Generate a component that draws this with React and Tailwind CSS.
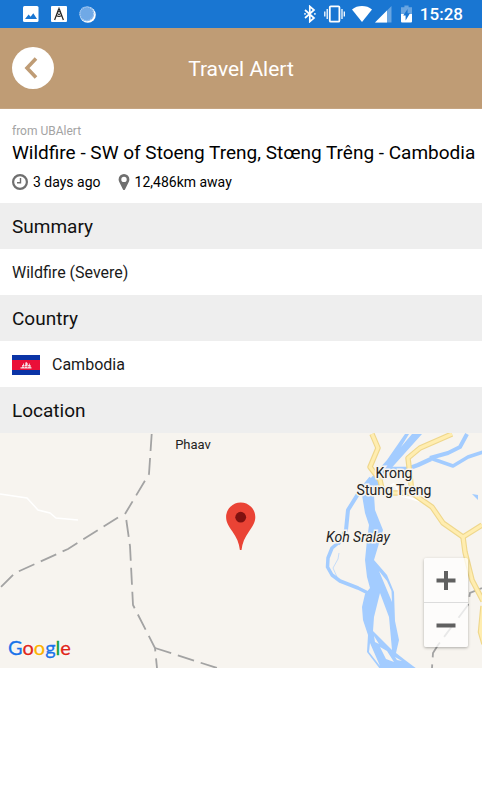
import React from 'react';

const alert = {
  source: 'UBAlert',
  title: 'Wildfire - SW of Stoeng Treng, Stœng Trêng - Cambodia',
  age: '3 days ago',
  distance: '12,486km away',
  summary: 'Wildfire (Severe)',
  country: 'Cambodia',
};

export default function App() {
  return (
    <div className="min-h-screen bg-white text-black font-['Roboto',sans-serif]">
      <StatusBar />
      <Header title="Travel Alert" />
      <main>
        <section className="px-3 pt-[14px] h-[94px]">
          <p className="text-[12px] leading-4 text-[#a3a3a3]">from {alert.source}</p>
          <h2 className="text-[19px] leading-7 whitespace-nowrap">{alert.title}</h2>
          <div className="flex items-center h-[30px] text-[14px]">
            <ClockIcon />
            <span className="ml-[5px]">{alert.age}</span>
            <PinIcon />
            <span className="ml-[5px]">{alert.distance}</span>
          </div>
        </section>

        <SectionTitle>Summary</SectionTitle>
        <Row>{alert.summary}</Row>
        <SectionTitle>Country</SectionTitle>
        <Row>
          <Flag />
          {alert.country}
        </Row>
        <SectionTitle>Location</SectionTitle>
        <LocationMap />
      </main>
    </div>
  );
}

const SectionTitle = ({ children }) => (
  <h3 className="flex items-center h-[46px] px-3 pt-0.5 bg-[#eeeeee] text-[19px] text-[#111]">{children}</h3>
);

const Row = ({ children }) => (
  <div className="flex items-center gap-3 h-[46px] px-3 pt-0.5 text-[16px] text-[#1a1a1a]">{children}</div>
);

const Header = ({ title }) => (
  <header className="grid grid-cols-[42px_1fr_42px] items-center h-[81px] px-3 border-b border-[#c6a582] bg-[#bf9c75]">
    <button type="button" aria-label="Back" className="w-[42px] h-[42px] rounded-full bg-white flex items-center justify-center">
      <svg width="42" height="42" viewBox="0 0 42 42" fill="none">
        <path d="M24 11.5 15 21l9 9.500" stroke="#bf9c75" strokeWidth="3.600" />
      </svg>
    </button>
    <h1 className="pt-1 text-center text-[21px] text-white">{title}</h1>
  </header>
);

const StatusBar = () => (
  <div className="flex items-center justify-between h-7 pl-[23px] pr-[19px] bg-[#1976d2] text-white">
    <div className="flex items-center gap-3">
      <svg width="16" height="16" viewBox="0 0 16 16">
        <rect width="15.5" height="16" rx="1.5" fill="#fff" />
        <path d="M2 13l3.6-4.6 2 2.4 2.7-3.6L14 13z" fill="#1976d2" />
      </svg>
      <svg width="16" height="16" viewBox="0 0 16 16">
        <rect width="16" height="16" rx="1" fill="#fff" />
        <path d="M8 1.5v2M7.6 3.2 3.6 14M8.4 3.2l4 10.8M5.4 9.4c1.6 1.2 3.6 1.2 5.2 0" stroke="#222" strokeWidth="1.2" fill="none" />
        <circle cx="8" cy="7" r="1.5" fill="#fff" stroke="#222" />
      </svg>
      <svg width="17" height="17" viewBox="0 0 17 17">
        <circle cx="8.8" cy="8.8" r="8" fill="#fff" />
        <circle cx="7.8" cy="7.8" r="7.4" fill="#70a9e6" />
        <circle cx="7.8" cy="7.8" r="6.9" fill="none" stroke="#b5d3f4" strokeWidth="1.3" strokeDasharray="1 1" />
      </svg>
    </div>
    <div className="flex items-center">
      <svg width="12" height="18" viewBox="0 0 12 18" fill="none" stroke="#fff" strokeWidth="1.7">
        <path d="M1 5l9 8-4.2 3.6V1.4L10 5l-9 8" />
        <path d="M.3 8.900h1.400M10.200 8.900h1.400" />
      </svg>
      <svg className="ml-2" width="21" height="18" viewBox="0 0 21 18" fill="none" stroke="#fff">
        <rect x="5.8" y="1.3" width="9.6" height="15.4" rx="1" strokeWidth="1.8" />
        <path d="M3.2 4v10M18 4v10M.8 6.5v5M20.3 6.5v5" strokeWidth="1.3" />
      </svg>
      <svg className="ml-[7px]" width="20" height="18" viewBox="0 0 20 18">
        <path d="M10 17 0 4.4C5.4-.2 14.6-.2 20 4.4z" fill="#fff" />
      </svg>
      <svg className="ml-[3px]" width="17" height="17" viewBox="0 0 17 17">
        <path d="M16.5 0v16.5H0z" fill="#fff" opacity=".35" />
        <path d="M12 4.5v12H0z" fill="#fff" />
      </svg>
      <svg className="ml-[9px]" width="11" height="18" viewBox="0 0 11 18">
        <path d="M3.4.5h4.2v1.7H11v7H0v-7h3.4z" fill="#fff" opacity=".35" />
        <path d="M0 9h11v7.5a1 1 0 0 1-1 1H1a1 1 0 0 1-1-1z" fill="#fff" />
        <path d="M6.6 4v4.2H9L4.6 15.4v-4.8H2.2z" fill="#1976d2" />
      </svg>
      <span className="ml-2 pt-0.5 text-[17px] font-medium">15:28</span>
    </div>
  </div>
);

const ClockIcon = () => (
  <svg width="16" height="16" viewBox="0 0 16 16" fill="none" stroke="#6f6f6f">
    <circle cx="8" cy="8" r="6.9" strokeWidth="2.2" />
    <path d="M8.5 4v4.8H5" strokeWidth="1.4" />
  </svg>
);

const PinIcon = () => (
  <svg className="ml-[17px]" width="12" height="16" viewBox="0 0 12 16">
    <path
      fillRule="evenodd"
      fill="#6f6f6f"
      d="M6 0a5.4 5.4 0 0 1 5.4 5.4c0 1.2-.4 2-.8 2.9L7 15.4c-.4.8-1.6.8-2 0L1.4 8.3C1 7.4.6 6.6.6 5.4A5.4 5.4 0 0 1 6 0zm0 2.7a2.7 2.7 0 1 0 0 5.4 2.7 2.7 0 0 0 0-5.4z"
    />
  </svg>
);

const Flag = () => (
  <svg width="28" height="20" viewBox="0 0 28 20">
    <rect width="28" height="20" fill="#0a33a6" />
    <rect y="5" width="28" height="10" fill="#ea0f38" />
    <path d="M8.5 13.5h11v-1.3h-.9V10h-.8V8.5h-.9V10h-1.2V8.2L14 6.8l-.7 1.4V10h-1.4V8.5h-.9V10h-.9v2.2h-1.6z" fill="#f6dfe3" />
    <path d="M10.6 11.5h6.8M12.5 10v2.8M15.6 10v2.8" stroke="#ea0f38" strokeWidth=".5" />
  </svg>
);

// Borders are drawn dashed, roads get a darker casing under the fill
const borders = [
  'M151.7 0 149 40 125 80',
  'M118 83.5 68 115 15 139 0 154',
  'M126.3 86 130 112 133 171 155 214 157 234',
  'M155 214 217 234',
  'M482 154 470 159 468 171 438 211 433 219 432 234',
];

const roads = [
  'M372 0 378 14 370 33 380 46 383 59H410',
  'M452 0 420 14 408 24 412 59 432 73 443 89 463 103 482 91',
  'M463 103 465 118 472 146 483 167',
  'M483 172 480.5 198 484 210',
];

const LocationMap = () => (
  <div className="relative h-[235px] bg-[#f7f4ef] overflow-hidden">
    <svg className="block w-full h-full" viewBox="0 -1 482 235" preserveAspectRatio="xMidYMid slice" fill="none">
      <path d="M0 60 27 64 38 76 50 79 56 84 78 86" stroke="#fff" strokeWidth="1.5" />

      <g fill="#a3ccff">
        <path
          fillRule="evenodd"
          d="M405 0 387 26 370 45 362 61 365 79 369 91 367 106 365 126 367 143 370 154 365 160 362 173 363 186 368 201 367 218 380 235H417L405 226 396 219 399 206 395 187 394 158 387 141 374 126 383 96 375 76 374 61 387 39 422 0zM409 0h3L401 13zM379 137 392 168 391.5 157 387 147zM380 159 389 183 392 216 373 197 374 183zM370 209 369 218 380 232zM374 202 379 210 375 208zM380 213 387 217 394 228 386 225zM395 223 402 227 397 226z"
        />
        <path d="M472 60 478 61V66z" />
      </g>
      <g stroke="#a3ccff" strokeLinejoin="round">
        <path d="M384 35 407 35 418 31 431 25" strokeWidth="4.5" />
        <path d="M430 24 453 32 468 23 483 18" strokeWidth="3.5" />
        <path d="M430 24 448 19 460 13 467 0" strokeWidth="4" />
        <path d="M371 44 358 60 348 76 346 96 338 110" strokeWidth="4" />
        <path d="M344 104 332 114 328 124 327.5 133 332 141 340 147 358 154 368 159" strokeWidth="3.5" />
        <path d="M339 119 338 125 333 134 337 143" strokeWidth="1" opacity=".6" />
      </g>

      <g stroke="#a3a3a3" strokeWidth="1.8" strokeDasharray="17 7">
        {borders.map((d) => <path key={d} d={d} />)}
      </g>

      <path d="M382 56 394 50 402 62 420 67" stroke="#fff" strokeWidth="2" />
      <g stroke="#efd78c" strokeWidth="5.5" strokeLinejoin="round">
        {roads.map((d) => <path key={d} d={d} />)}
      </g>
      <g stroke="#ffedb0" strokeWidth="3.2" strokeLinejoin="round">
        {roads.map((d) => <path key={d} d={d} />)}
      </g>

      <g fill="#222" stroke="#f7f4ef" strokeWidth="3" paintOrder="stroke" textAnchor="middle" className="text-[14px]">
        <text x="193" y="15" className="text-[13px]">Phaav</text>
        <text x="394" y="44">Krong</text>
        <text x="394" y="61">Stung Treng</text>
        <text x="358" y="108" className="italic">Koh Sralay</text>
      </g>

      <path
        d="M240.7 68.5a14.6 14.6 0 0 1 14.6 14.6c0 5.8-3 9.6-6.3 14.4-4.2 6.2-6.7 11.2-7.5 18.5h-1.6c-.8-7.3-3.3-12.3-7.5-18.5-3.3-4.8-6.3-8.6-6.3-14.4a14.6 14.6 0 0 1 14.6-14.6z"
        fill="#ea4335"
      />
      <circle cx="240.7" cy="83.2" r="5.4" fill="#7f1110" />
    </svg>

    <div className="absolute left-2 bottom-[9px] text-[20px] leading-6 font-['Lato',sans-serif] [-webkit-text-stroke:0.3px_currentColor] [text-shadow:0_0_2px_#fff,0_0_2px_#fff]">
      <span className="text-[#1a73e8]">G</span>
      <span className="text-[#e02418]">o</span>
      <span className="text-[#fbb200]">o</span>
      <span className="text-[#1a73e8]">g</span>
      <span className="text-[#109d3c]">l</span>
      <span className="text-[#e02418]">e</span>
    </div>

    <div className="absolute right-[14px] bottom-[21px] w-11 rounded-xs bg-white/75 shadow-[0_1px_3px_rgba(0,0,0,0.3)]">
      <ZoomButton label="Zoom in" d="M12.500 22.500h19M22 13v19" />
      <div className="h-px bg-[#dcdcdc]" />
      <ZoomButton label="Zoom out" d="M12.500 22.500h19" />
    </div>
  </div>
);

const ZoomButton = ({ label, d }) => (
  <button type="button" aria-label={label} className="block w-11 h-11">
    <svg width="44" height="44" viewBox="0 0 44 44">
      <path d={d} stroke="#606060" strokeWidth="4" />
    </svg>
  </button>
);
